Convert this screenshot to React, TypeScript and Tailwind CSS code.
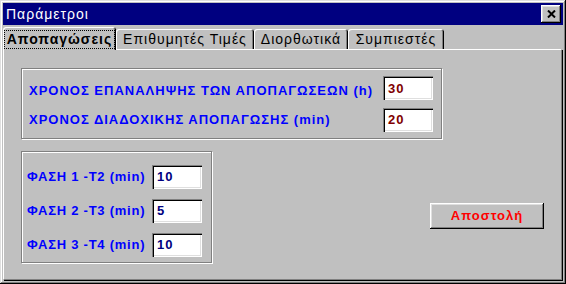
import React from 'react'

const font = { fontFamily: '"Liberation Sans", Arial, sans-serif' }

function Field({ value, color }: { value: string; color: string }) {
  return (
    <div
      className={`w-[50px] h-[24px] bg-white flex items-center pl-[5px] text-[13px] font-bold tracking-[1px] shadow-[inset_1px_1px_0_#808080,inset_2px_2px_0_#000,inset_-1px_-1px_0_#fff,inset_-2px_-2px_0_#dfdfdf] ${color}`}
    >
      {value}
    </div>
  )
}

const tabs = [
  { label: 'Αποπαγώσεις', w: 'w-[113px]', active: true },
  { label: 'Επιθυμητές Τιμές', w: 'w-[138px]', active: false },
  { label: 'Διορθωτικά', w: 'w-[94px]', active: false },
  { label: 'Συμπιεστές', w: 'w-[96px]', active: false },
]

export default function App() {
  return (
    <div
      style={font}
      className="w-[566px] h-[284px] bg-[#c0c0c0] p-[3px] flex flex-col shadow-[inset_-1px_-1px_0_#000,inset_1px_1px_0_#dfdfdf,inset_-2px_-2px_0_#808080,inset_2px_2px_0_#fff]"
    >
      {/* title bar */}
      <div className="h-[22px] shrink-0 bg-[#000080] flex items-center justify-between pl-[3px] pr-[2px]">
        <span className="text-white text-[14px] tracking-[1px] leading-none">Παράμετροι</span>
        <button className="w-[20px] h-[18px] bg-[#c0c0c0] flex items-center justify-center shadow-[inset_-1px_-1px_0_#000,inset_1px_1px_0_#fff,inset_-2px_-2px_0_#808080,inset_2px_2px_0_#dfdfdf]">
          <svg width="9" height="8" viewBox="0 0 9 8">
            <path d="M1 0.5 L8 7.5 M8 0.5 L1 7.5" stroke="#000" strokeWidth="2" />
          </svg>
        </button>
      </div>

      {/* tabs */}
      <div className="mt-[2px] h-[22px] shrink-0 flex items-end relative z-10">
        {tabs.map(t =>
          t.active ? (
            <div
              key={t.label}
              className={`${t.w} h-[23px] -mb-[1px] bg-[#c0c0c0] rounded-t-[3px] flex items-start justify-center pt-[3px] shadow-[inset_1px_1px_0_#fff,inset_-1px_0_0_#000,inset_-2px_0_0_#808080]`}
            >
              <span className="border border-dotted border-black px-[2px] h-[19px] flex items-center text-[14px] font-bold tracking-[1px] text-black">
                {t.label}
              </span>
            </div>
          ) : (
            <div
              key={t.label}
              className={`${t.w} h-[20px] bg-[#c0c0c0] rounded-t-[3px] flex items-center justify-center text-[14px] tracking-[1px] text-black shadow-[inset_1px_1px_0_#fff,inset_-1px_0_0_#000,inset_-2px_0_0_#808080]`}
            >
              {t.label}
            </div>
          )
        )}
      </div>

      {/* panel */}
      <div className="flex-1 border-t border-l border-white border-r border-b border-r-[#808080] border-b-[#808080] shadow-[1px_1px_0_#000] mr-[1px] mb-[1px] pl-[17px] pt-[18px]">
        <div className="w-[421px] h-[71px] border border-[#808080] shadow-[1px_1px_0_#fff,inset_1px_1px_0_#fff] pl-[7px] pt-[7px] flex flex-col gap-[7px]">
          <div className="flex items-center">
            <span className="w-[354px] pt-[5px] text-[13px] font-bold tracking-[1px] text-[#0000ff]">
              ΧΡΟΝΟΣ ΕΠΑΝΑΛΗΨΗΣ ΤΩΝ ΑΠΟΠΑΓΩΣΕΩΝ (h)
            </span>
            <Field value="30" color="text-[#800000]" />
          </div>
          <div className="flex items-center">
            <span className="w-[354px] text-[13px] font-bold tracking-[1px] text-[#0000ff]">
              ΧΡΟΝΟΣ ΔΙΑΔΟΧΙΚΗΣ ΑΠΟΠΑΓΩΣΗΣ (min)
            </span>
            <Field value="20" color="text-[#800000]" />
          </div>
        </div>

        <div className="flex items-start mt-[12px]">
          <div className="w-[191px] h-[112px] border border-[#808080] shadow-[1px_1px_0_#fff,inset_1px_1px_0_#fff] pl-[5px] pt-[13px] flex flex-col gap-[10px]">
            {[
              ['ΦΑΣΗ 1 -Τ2 (min)', '10'],
              ['ΦΑΣΗ 2 -Τ3 (min)', '5'],
              ['ΦΑΣΗ 3 -Τ4 (min)', '10'],
            ].map(([l, v]) => (
              <div key={l} className="flex items-center">
                <span className="w-[125px] text-[13px] font-bold tracking-[0.75px] text-[#0000ff]">{l}</span>
                <Field value={v} color="text-[#000080]" />
              </div>
            ))}
          </div>
          <button className="ml-[218px] mt-[52px] w-[114px] h-[26px] bg-[#c0c0c0] text-[#ff0000] text-[13px] font-bold tracking-[1px] shadow-[inset_-1px_-1px_0_#000,inset_1px_1px_0_#fff,inset_-2px_-2px_0_#808080,inset_2px_2px_0_#dfdfdf]">
            Αποστολή
          </button>
        </div>
      </div>
    </div>
  )
}
